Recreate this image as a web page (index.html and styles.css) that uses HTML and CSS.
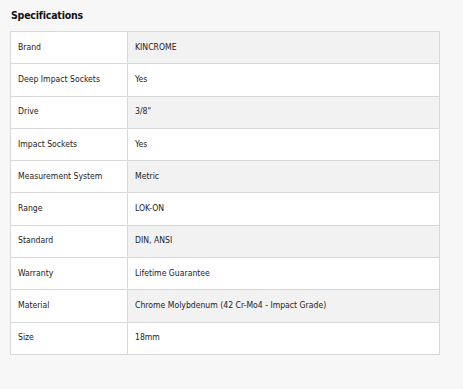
FILE: index.html
```html
<!DOCTYPE html>
<html>
<head>
<meta charset="utf-8">
<link rel="stylesheet" href="styles.css">
</head>
<body>
<div class="specs">
  <h2 class="specs-title">Specifications</h2>
  <table class="specs-table">
    <tr class="odd"><td class="label">Brand</td><td class="value">KINCROME</td></tr>
    <tr><td class="label">Deep Impact Sockets</td><td class="value">Yes</td></tr>
    <tr class="odd"><td class="label">Drive</td><td class="value">3/8"</td></tr>
    <tr><td class="label">Impact Sockets</td><td class="value">Yes</td></tr>
    <tr class="odd"><td class="label">Measurement System</td><td class="value">Metric</td></tr>
    <tr><td class="label">Range</td><td class="value">LOK-ON</td></tr>
    <tr class="odd"><td class="label">Standard</td><td class="value">DIN, ANSI</td></tr>
    <tr><td class="label">Warranty</td><td class="value">Lifetime Guarantee</td></tr>
    <tr class="odd"><td class="label">Material</td><td class="value">Chrome Molybdenum (42 Cr-Mo4 - Impact Grade)</td></tr>
    <tr><td class="label">Size</td><td class="value">18mm</td></tr>
  </table>
</div>
</body>
</html>
```

FILE: styles.css
```css
html, body {
  margin: 0;
  padding: 0;
  background: #f7f7f7;
}
body {
  font-family: "DejaVu Sans Condensed", "DejaVu Sans", sans-serif;
  color: #222;
}
.specs {
  padding: 8px 24px 0 10px;
}
.specs-title {
  margin: 0 0 8px 1px;
  font-size: 10.5px;
  font-weight: bold;
  line-height: 15px;
  color: #111;
  letter-spacing: -0.2px;
}
.specs-table {
  width: 430px;
  border-collapse: collapse;
  font-size: 8.6px;
}
.specs-table tr {
  height: 32.3px;
}
.specs-table td {
  border: 1px solid #d8d8d8;
  padding: 0 7px 2px;
  background: #fff;
  vertical-align: middle;
  line-height: 12px;
}
.specs-table .label {
  width: 102px;
}
.specs-table .odd .value {
  background: #f2f2f2;
}
```
